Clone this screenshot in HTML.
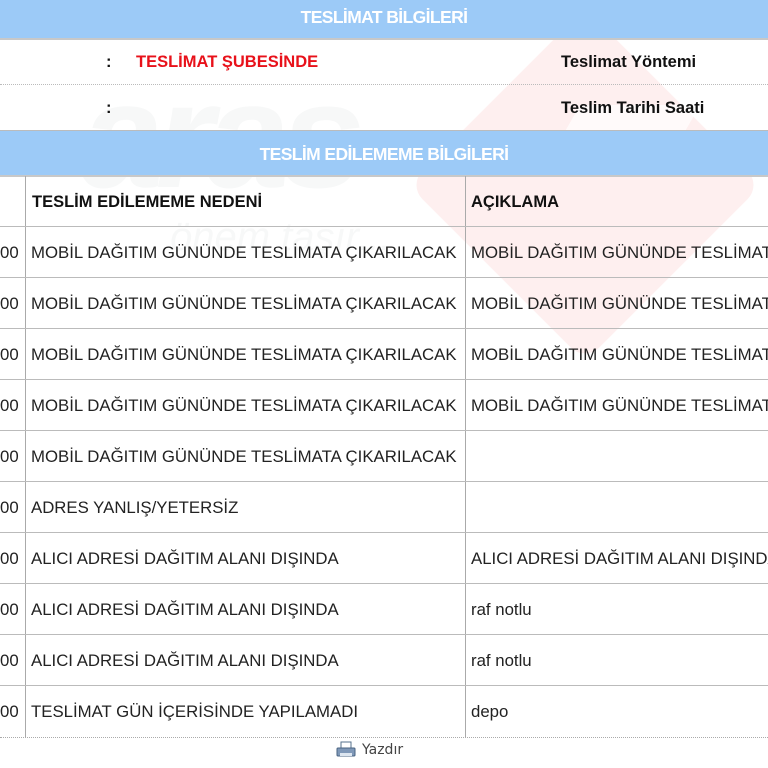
<!DOCTYPE html>
<html><head><meta charset="utf-8"><style>
body{margin:0;width:768px;height:768px;overflow:hidden;background:#fff;font-family:"Liberation Sans",Arial,sans-serif;position:relative}
.a{position:absolute}
.hb{position:absolute;left:0;width:768px;height:44px;background:#9ccaf7;color:#fff;font-weight:bold;font-size:17.5px;text-align:center;line-height:40px;border-bottom:2px solid #c8c8c8;letter-spacing:-0.6px}
.hl{position:absolute;left:0;width:768px;border-top:1px solid #bbb}
.t{position:absolute;font-size:16.8px;color:#222;white-space:nowrap}
.b{font-weight:bold;color:#111;font-size:16.5px}
</style></head><body>
<!-- watermark -->
<div class="a" style="left:460px;top:60px;width:250px;height:250px;background:rgba(240,80,80,0.09);transform:rotate(45deg);border-radius:20px"></div>
<div class="a" style="left:560px;top:105px;width:120px;height:70px;background:rgba(255,255,255,0.7);transform:skewX(-30deg)"></div>
<div class="a" style="left:80px;top:60px;font-size:150px;font-weight:bold;font-style:italic;color:rgba(150,160,170,0.08);letter-spacing:-8px;line-height:150px">aras</div>
<div class="a" style="left:170px;top:215px;font-size:40px;font-style:italic;color:rgba(150,160,170,0.08)">önem taşır...</div>

<div class="hb" style="top:-6px;height:44px;line-height:46px">TESLİMAT BİLGİLERİ</div>
<div class="t b" style="left:106px;top:53px">:</div>
<div class="t b" style="left:136px;top:53px;color:#e8111a">TESLİMAT ŞUBESİNDE</div>
<div class="t b" style="left:561px;top:53px">Teslimat Yöntemi</div>
<div class="hl" style="top:84px;border-top:1px dotted #bbb"></div>
<div class="t b" style="left:106px;top:99px">:</div>
<div class="t b" style="left:561px;top:99px">Teslim Tarihi Saati</div>
<div class="hb" style="top:130px;height:44px;line-height:46px;border-top:1px solid #bbb">TESLİM EDİLEMEME BİLGİLERİ</div>

<div class="t b" style="left:32px;top:193px">TESLİM EDİLEMEME NEDENİ</div>
<div class="t b" style="left:471px;top:193px">AÇIKLAMA</div>

<div class="a" style="left:25px;top:176px;height:561px;border-left:1px solid #aaa"></div>
<div class="a" style="left:465px;top:176px;height:561px;border-left:1px solid #aaa"></div>

<div class="hl" style="top:226px"></div>
<div class="t" style="left:0;top:243px">00</div><div class="t" style="left:31px;top:243px">MOBİL DAĞITIM GÜNÜNDE TESLİMATA ÇIKARILACAK</div><div class="t" style="left:471px;top:243px">MOBİL DAĞITIM GÜNÜNDE TESLİMATA</div>
<div class="hl" style="top:277px"></div>
<div class="t" style="left:0;top:294px">00</div><div class="t" style="left:31px;top:294px">MOBİL DAĞITIM GÜNÜNDE TESLİMATA ÇIKARILACAK</div><div class="t" style="left:471px;top:294px">MOBİL DAĞITIM GÜNÜNDE TESLİMATA</div>
<div class="hl" style="top:328px"></div>
<div class="t" style="left:0;top:345px">00</div><div class="t" style="left:31px;top:345px">MOBİL DAĞITIM GÜNÜNDE TESLİMATA ÇIKARILACAK</div><div class="t" style="left:471px;top:345px">MOBİL DAĞITIM GÜNÜNDE TESLİMATA</div>
<div class="hl" style="top:379px"></div>
<div class="t" style="left:0;top:396px">00</div><div class="t" style="left:31px;top:396px">MOBİL DAĞITIM GÜNÜNDE TESLİMATA ÇIKARILACAK</div><div class="t" style="left:471px;top:396px">MOBİL DAĞITIM GÜNÜNDE TESLİMATA</div>
<div class="hl" style="top:430px"></div>
<div class="t" style="left:0;top:447px">00</div><div class="t" style="left:31px;top:447px">MOBİL DAĞITIM GÜNÜNDE TESLİMATA ÇIKARILACAK</div>
<div class="hl" style="top:481px"></div>
<div class="t" style="left:0;top:498px">00</div><div class="t" style="left:31px;top:498px">ADRES YANLIŞ/YETERSİZ</div>
<div class="hl" style="top:532px"></div>
<div class="t" style="left:0;top:549px">00</div><div class="t" style="left:31px;top:549px">ALICI ADRESİ DAĞITIM ALANI DIŞINDA</div><div class="t" style="left:471px;top:549px">ALICI ADRESİ DAĞITIM ALANI DIŞINDA</div>
<div class="hl" style="top:583px"></div>
<div class="t" style="left:0;top:600px">00</div><div class="t" style="left:31px;top:600px">ALICI ADRESİ DAĞITIM ALANI DIŞINDA</div><div class="t" style="left:471px;top:600px">raf notlu</div>
<div class="hl" style="top:634px"></div>
<div class="t" style="left:0;top:651px">00</div><div class="t" style="left:31px;top:651px">ALICI ADRESİ DAĞITIM ALANI DIŞINDA</div><div class="t" style="left:471px;top:651px">raf notlu</div>
<div class="hl" style="top:685px"></div>
<div class="t" style="left:0;top:702px">00</div><div class="t" style="left:31px;top:702px">TESLİMAT GÜN İÇERİSİNDE YAPILAMADI</div><div class="t" style="left:471px;top:702px">depo</div>
<div class="hl" style="top:737px;border-top:1px dotted #aaa"></div>

<svg class="a" style="left:336px;top:741px" width="20" height="18" viewBox="0 0 20 18">
<rect x="5" y="1" width="10" height="7" fill="#fff" stroke="#56708c"/>
<rect x="1" y="7" width="18" height="8" rx="1" fill="#7f98b8" stroke="#4a6382"/>
<rect x="4" y="12" width="12" height="3" fill="#dde6f0"/>
</svg>
<div class="a" style="left:362px;top:742px;font-size:14px;color:#444;font-family:'DejaVu Sans',sans-serif">Yazdır</div>
</body></html>
